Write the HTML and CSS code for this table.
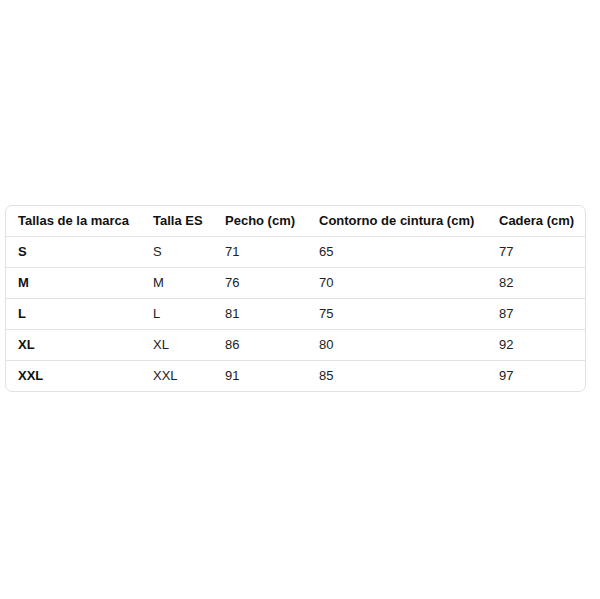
FILE: index.html
```html
<!DOCTYPE html>
<html lang="es">
<head>
<meta charset="utf-8">
<link rel="stylesheet" href="styles.css">
</head>
<body>
<div class="page">
  <div class="wrap">
    <table class="sizes">
      <colgroup>
        <col class="c1"><col class="c2"><col class="c3"><col class="c4"><col class="c5">
      </colgroup>
      <thead>
        <tr><th>Tallas de la marca</th><th>Talla ES</th><th>Pecho (cm)</th><th>Contorno de cintura (cm)</th><th>Cadera (cm)</th></tr>
      </thead>
      <tbody>
        <tr><td class="b">S</td><td>S</td><td>71</td><td>65</td><td>77</td></tr>
        <tr><td class="b">M</td><td>M</td><td>76</td><td>70</td><td>82</td></tr>
        <tr><td class="b">L</td><td>L</td><td>81</td><td>75</td><td>87</td></tr>
        <tr><td class="b">XL</td><td>XL</td><td>86</td><td>80</td><td>92</td></tr>
        <tr><td class="b">XXL</td><td>XXL</td><td>91</td><td>85</td><td>97</td></tr>
      </tbody>
    </table>
  </div>
</div>
</body>
</html>
```
FILE: styles.css
```css
html, body {
  margin: 0;
  padding: 0;
  background: #ffffff;
}
.page {
  width: 600px;
  height: 599px;
  display: flex;
  align-items: center;
  justify-content: flex-start;
  padding-left: 5px;
  box-sizing: border-box;
}
.wrap {
  width: 579px;
  border: 1px solid #e2e2e2;
  border-radius: 7px;
  overflow: hidden;
  margin-top: -3px;
}
.sizes {
  width: 100%;
  border-collapse: collapse;
  table-layout: fixed;
  font-family: "Liberation Sans", Arial, sans-serif;
  font-size: 13px;
  color: #111;
}
.c1 { width: 135px; }
.c2 { width: 72px; }
.c3 { width: 94px; }
.c4 { width: 180px; }
.c5 { width: auto; }
th, td {
  text-align: left;
  padding: 0 0 0 12px;
  height: 30px;
  white-space: nowrap;
  border-top: 1px solid #e2e2e2;
  color: #222;
}
thead th {
  border-top: none;
  font-weight: bold;
  color: #111;
}
td.b {
  font-weight: bold;
  color: #111;
}
```
